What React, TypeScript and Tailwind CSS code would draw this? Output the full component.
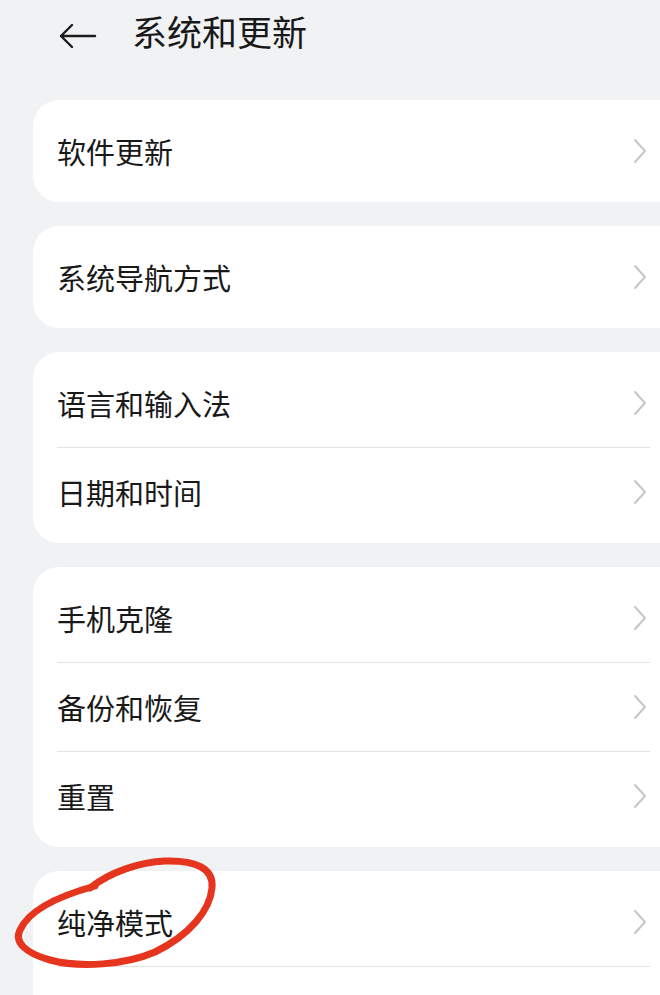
const font = { fontFamily: '"Noto Sans CJK SC", "Noto Sans", sans-serif' }

const groups: string[][] = [
  ["软件更新"],
  ["系统导航方式"],
  ["语言和输入法", "日期和时间"],
  ["手机克隆", "备份和恢复", "重置"],
  ["纯净模式", ""],
]

function Chevron() {
  return (
    <svg width="14" height="26" viewBox="0 0 14 26" fill="none" className="shrink-0">
      <path d="M2 2 L12 13 L2 24" stroke="#c6c6c8" strokeWidth="2" strokeLinecap="round" strokeLinejoin="round" />
    </svg>
  )
}

function Row({ label }: { label: string }) {
  return (
    <div className="flex h-[88px] items-center justify-between pl-[24px] pr-[66px]">
      <span className="text-[29px] leading-none text-[#191919]">{label}</span>
      {label && <Chevron />}
    </div>
  )
}

export default function App() {
  return (
    <div className="relative h-[995px] w-[660px] overflow-hidden bg-[#f1f2f4]" style={font}>
      <div className="flex h-[60px] items-center pl-[59px]">
        <svg width="38" height="26" viewBox="0 0 38 26" fill="none" className="mt-[12px]">
          <path d="M36 13 H2 M13 2 L2 13 L13 24" stroke="#1c1c1c" strokeWidth="2.4" strokeLinecap="round" strokeLinejoin="round" />
        </svg>
        <h1 className="ml-[35px] text-[35px] font-normal leading-none text-[#191919]">系统和更新</h1>
      </div>

      <div className="mt-[40px] flex flex-col gap-[24px] pl-[33px]">
        {groups.map((items, gi) => (
          <div key={gi} className="w-[680px] rounded-[26px] bg-white py-[7px]">
            {items.map((label, i) => (
              <div key={i}>
                {i > 0 && <div className="ml-[24px] mr-[63px] h-px bg-[#e2e2e4]" />}
                <Row label={label} />
              </div>
            ))}
          </div>
        ))}
      </div>

      <svg className="pointer-events-none absolute left-0 top-0" width="660" height="995" viewBox="0 0 660 995" fill="none">
        <path
          d="M90 888 C110 872, 140 862, 165 861 C195 860, 214 868, 212 888 C210 910, 190 935, 155 952 C125 965, 80 968, 50 960 C25 953, 14 942, 20 930 C28 912, 55 897, 95 886"
          stroke="#e6351f"
          strokeWidth="7"
          strokeLinecap="round"
          strokeLinejoin="round"
        />
      </svg>
    </div>
  )
}
